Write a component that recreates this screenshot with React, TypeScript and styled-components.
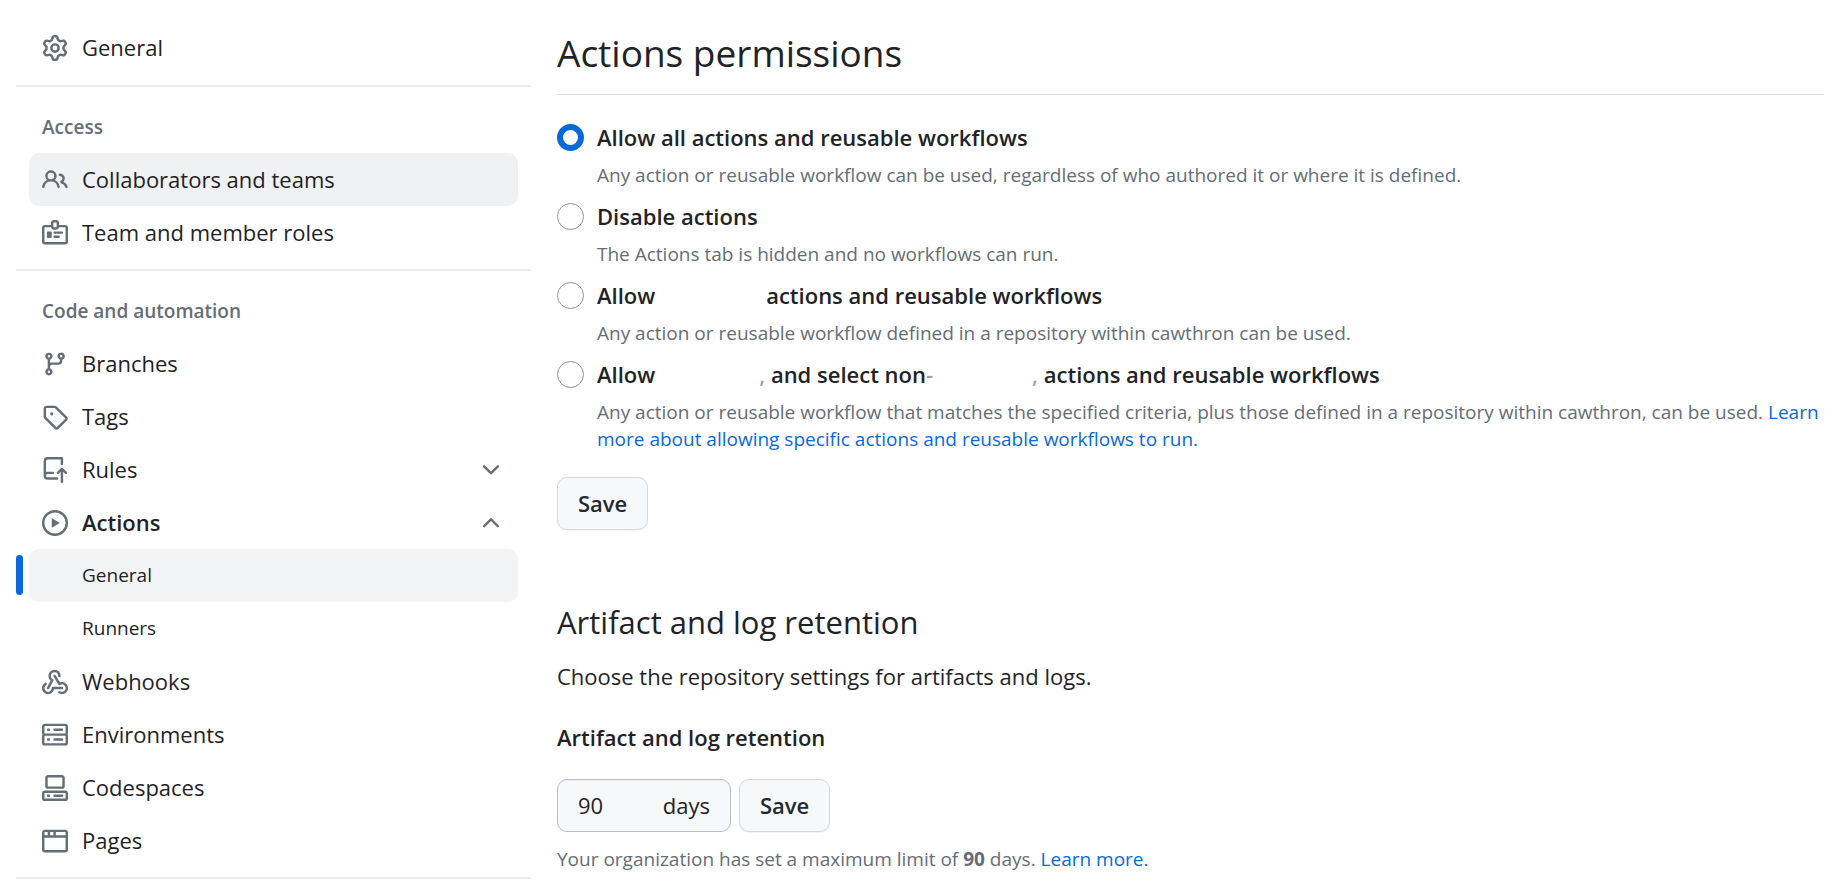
import React, { useState } from 'react';
import styled, { createGlobalStyle } from 'styled-components';

const color = {
  text: '#1f2328',
  muted: '#656d76',
  link: '#0969da',
  border: '#d8dee4',
  divider: '#e8ebef',
  hover: '#f0f1f3',
  selected: '#f3f4f6',
  control: '#f6f8fa',
};

const GlobalStyle = createGlobalStyle`
  *, *::before, *::after { box-sizing: border-box; }
  body {
    margin: 0;
    background: #ffffff;
    color: ${color.text};
    font-family: "Open Sans", "Noto Sans", sans-serif;
    font-size: 22px;
    line-height: 33px;
  }
`;

const Page = styled.div`
  display: grid;
  grid-template-columns: 515px minmax(0, 1fr);
  column-gap: 26px;
  padding: 0 18px 0 16px;

  @media (max-width: 1100px) {
    grid-template-columns: minmax(0, 1fr);
  }
`;

const Sidebar = styled.nav`
  padding-top: 21px;
`;

const NavGroup = styled.section`
  padding-bottom: 10px;
  border-bottom: 2px solid ${color.divider};

  &:first-child {
    padding-bottom: 11px;
  }
`;

const GroupTitle = styled.h3`
  margin: 0;
  padding: 28px 26px 14px;
  font-size: 19px;
  font-weight: 600;
  line-height: 24px;
  color: ${color.muted};
`;

const NavList = styled.ul`
  list-style: none;
  margin: 0;
  padding: 0;
`;

const NavItem = styled.li`
  margin: 0 13px;
`;

const SubItem = styled.li``;

const NavLink = styled.a<{ $highlight?: boolean }>`
  display: flex;
  align-items: center;
  gap: 14px;
  height: 53px;
  padding: 0 13px;
  border-radius: 10px;
  color: ${color.text};
  text-decoration: none;
  background: ${(p) => (p.$highlight ? color.hover : 'transparent')};
`;

const NavToggle = styled.button<{ $current?: boolean }>`
  display: flex;
  align-items: center;
  gap: 14px;
  width: 100%;
  height: 53px;
  padding: 0 14px 0 13px;
  border: 0;
  border-radius: 10px;
  background: transparent;
  color: ${color.text};
  font: inherit;
  font-weight: ${(p) => (p.$current ? 600 : 400)};
  text-align: left;
  cursor: pointer;
`;

const ToggleLabel = styled.span`
  flex: 1;
`;

const SubLink = styled.a<{ $current?: boolean }>`
  position: relative;
  display: flex;
  align-items: center;
  height: 53px;
  padding-left: 53px;
  border-radius: 10px;
  font-size: 19px;
  color: ${color.text};
  text-decoration: none;
  background: ${(p) => (p.$current ? color.selected : 'transparent')};

  &::before {
    content: '';
    display: ${(p) => (p.$current ? 'block' : 'none')};
    position: absolute;
    top: 6px;
    bottom: 7px;
    left: -13px;
    width: 7px;
    border-radius: 4px;
    background: ${color.link};
  }
`;

const IconSvg = styled.svg`
  flex: none;
  width: 26px;
  height: 26px;
  fill: ${color.muted};
`;

const Main = styled.main`
  padding: 29px 0 12px;
`;

const Title = styled.h2`
  margin: 0 0 26px;
  padding-bottom: 17px;
  border-bottom: 1px solid ${color.border};
  font-size: 37px;
  font-weight: 400;
  line-height: 48px;
`;

const Options = styled.fieldset`
  display: flex;
  flex-direction: column;
  gap: 11px;
  min-width: 0;
  margin: 0 0 24px;
  padding: 0;
  border: 0;
`;

const Option = styled.div`
  display: grid;
  grid-template-columns: 27px minmax(0, 1fr);
  column-gap: 13px;
  row-gap: 9px;
  align-items: center;
`;

const Radio = styled.input`
  appearance: none;
  width: 27px;
  height: 27px;
  margin: 0;
  border: 1px solid #8c959f;
  border-radius: 50%;
  background: #ffffff;

  &:checked {
    border: 6px solid ${color.link};
  }
`;

const OptionLabel = styled.label`
  font-weight: 600;
  line-height: 32px;
`;

const OptionNote = styled.p`
  grid-column: 2;
  margin: 0;
  font-size: 19px;
  line-height: 27px;
  color: ${color.muted};
`;

const Blank = styled.span<{ $width: number }>`
  display: inline-block;
  width: ${(p) => p.$width}px;
`;

const Faded = styled.span`
  color: #a0a3a8;
`;

const TextLink = styled.a`
  color: ${color.link};
  text-decoration: none;
`;

const Button = styled.button`
  height: 53px;
  padding: 0 20px;
  border: 1px solid #d5d8db;
  border-radius: 10px;
  background: ${color.control};
  box-shadow: 0 1px 1px rgba(31, 35, 40, 0.05);
  color: #24292f;
  font: inherit;
  font-weight: 600;
  cursor: pointer;
`;

const SectionTitle = styled.h3`
  margin: 71px 0 17px;
  font-size: 31px;
  font-weight: 400;
  line-height: 42px;
`;

const Paragraph = styled.p`
  margin: 0 0 28px;
`;

const FieldLabel = styled.label`
  display: block;
  margin-bottom: 25px;
  font-weight: 600;
`;

const FieldRow = styled.div`
  display: flex;
  gap: 8px;
`;

const DaysField = styled.div`
  display: flex;
  align-items: center;
  justify-content: space-between;
  width: 174px;
  height: 53px;
  padding: 0 20px;
  border: 1px solid #b6bec8;
  border-radius: 10px;
  background: ${color.control};
  box-shadow: inset 0 1px 0 rgba(208, 215, 222, 0.3);
`;

const DaysInput = styled.input`
  width: 64px;
  padding: 0;
  border: 0;
  outline: 0;
  background: transparent;
  color: inherit;
  font: inherit;
`;

const Hint = styled.p`
  margin: 14px 0 0;
  font-size: 19px;
  line-height: 27px;
  color: ${color.muted};
`;

const paths = {
  gear: 'M8 0a8.2 8.2 0 0 1 .701.031C9.444.095 9.99.645 10.16 1.29l.288 1.107c.018.066.079.158.212.224.231.114.454.243.668.386.123.082.233.09.299.071l1.103-.303c.644-.176 1.392.021 1.82.63.27.385.506.792.704 1.218.315.675.111 1.422-.364 1.891l-.814.806c-.049.048-.098.147-.088.294.016.257.016.515 0 .772-.01.147.038.246.088.294l.814.806c.475.469.679 1.216.364 1.891a7.977 7.977 0 0 1-.704 1.217c-.428.61-1.176.807-1.82.63l-1.102-.302c-.067-.019-.177-.011-.3.071a5.909 5.909 0 0 1-.668.386c-.133.066-.194.158-.211.224l-.29 1.106c-.168.646-.715 1.196-1.458 1.26a8.006 8.006 0 0 1-1.402 0c-.743-.064-1.289-.614-1.458-1.26l-.289-1.106c-.018-.066-.079-.158-.212-.224a5.738 5.738 0 0 1-.668-.386c-.123-.082-.233-.09-.299-.071l-1.103.303c-.644.176-1.392-.021-1.82-.63a8.12 8.12 0 0 1-.704-1.218c-.315-.675-.111-1.422.363-1.891l.815-.806c.05-.048.098-.147.088-.294a6.214 6.214 0 0 1 0-.772c.01-.147-.038-.246-.088-.294l-.815-.806C.635 6.045.431 5.298.746 4.623a7.92 7.92 0 0 1 .704-1.217c.428-.61 1.176-.807 1.82-.63l1.102.302c.067.019.177.011.3-.071.214-.143.437-.272.668-.386.133-.066.194-.158.211-.224l.29-1.106C6.009.645 6.556.095 7.299.03 7.53.01 7.764 0 8 0Zm-.571 1.525c-.036.003-.108.036-.137.146l-.289 1.105c-.147.561-.549.967-.998 1.189-.173.086-.34.183-.5.29-.417.278-.97.423-1.529.27l-1.103-.303c-.109-.03-.175.016-.195.045-.22.312-.412.644-.573.99-.014.031-.021.11.059.19l.815.806c.411.406.562.957.53 1.456a4.709 4.709 0 0 0 0 .582c.032.499-.119 1.05-.53 1.456l-.815.806c-.081.08-.073.159-.059.19.162.346.353.677.573.989.02.03.085.076.195.046l1.102-.303c.56-.153 1.113-.008 1.53.27.161.107.328.204.501.29.447.222.85.629.997 1.189l.289 1.105c.029.109.101.143.137.146a6.6 6.6 0 0 0 1.142 0c.036-.003.108-.036.137-.146l.289-1.105c.147-.561.549-.967.998-1.189.173-.086.34-.183.5-.29.417-.278.97-.423 1.529-.27l1.103.303c.109.029.175-.016.195-.045.22-.313.411-.644.573-.99.014-.031.021-.11-.059-.19l-.815-.806c-.411-.406-.562-.957-.53-1.456a4.709 4.709 0 0 0 0-.582c-.032-.499.119-1.05.53-1.456l.815-.806c.081-.08.073-.159.059-.19a6.464 6.464 0 0 0-.573-.989c-.02-.03-.085-.076-.195-.046l-1.102.303c-.56.153-1.113.008-1.53-.27a4.44 4.44 0 0 0-.501-.29c-.447-.222-.85-.629-.997-1.189l-.289-1.105c-.029-.11-.101-.143-.137-.146a6.6 6.6 0 0 0-1.142 0ZM11 8a3 3 0 1 1-6 0 3 3 0 0 1 6 0ZM9.5 8a1.5 1.5 0 1 0-3.001.001A1.5 1.5 0 0 0 9.5 8Z',
  people:
    'M2 5.5a3.5 3.5 0 1 1 5.898 2.549 5.508 5.508 0 0 1 3.034 4.084.75.75 0 1 1-1.482.235 4 4 0 0 0-7.9 0 .75.75 0 0 1-1.482-.236A5.507 5.507 0 0 1 3.102 8.05 3.493 3.493 0 0 1 2 5.5ZM11 4a3.001 3.001 0 0 1 2.22 5.018 5.01 5.01 0 0 1 2.56 3.012.749.749 0 0 1-.885.954.752.752 0 0 1-.549-.514 3.507 3.507 0 0 0-2.522-2.372.75.75 0 0 1-.574-.73v-.352a.75.75 0 0 1 .416-.672A1.5 1.5 0 0 0 11 5.5.75.75 0 0 1 11 4Zm-5.5-.5a2 2 0 1 0-.001 3.999A2 2 0 0 0 5.5 3.5Z',
  badge:
    'M3 7.5a.5.5 0 0 1 .5-.5h2a.5.5 0 0 1 .5.5v3a.5.5 0 0 1-.5.5h-2a.5.5 0 0 1-.5-.5v-3Zm10 .25a.75.75 0 0 1-.75.75h-4.5a.75.75 0 0 1 0-1.5h4.5a.75.75 0 0 1 .75.75ZM10.25 11h-2.5a.75.75 0 0 1 0-1.5h2.5a.75.75 0 0 1 0 1.5Z M7.25 0h1.5c.966 0 1.75.784 1.75 1.75V3h3.75c.966 0 1.75.784 1.75 1.75v8.5A1.75 1.75 0 0 1 14.25 15H1.75A1.75 1.75 0 0 1 0 13.25v-8.5C0 3.784.784 3 1.75 3H5.5V1.75C5.5.784 6.284 0 7.25 0Zm3.232 4.5A1.75 1.75 0 0 1 8.75 6h-1.5a1.75 1.75 0 0 1-1.732-1.5H1.75a.25.25 0 0 0-.25.25v8.5c0 .138.112.25.25.25h12.5a.25.25 0 0 0 .25-.25v-8.5a.25.25 0 0 0-.25-.25ZM7 1.75v2.5c0 .138.112.25.25.25h1.5A.25.25 0 0 0 9 4.25v-2.5a.25.25 0 0 0-.25-.25h-1.5a.25.25 0 0 0-.25.25Z',
  branch:
    'M9.5 3.25a2.25 2.25 0 1 1 3 2.122V6A2.5 2.5 0 0 1 10 8.5H6a1 1 0 0 0-1 1v1.128a2.251 2.251 0 1 1-1.5 0V5.372a2.25 2.25 0 1 1 1.5 0v1.836A2.493 2.493 0 0 1 6 7h4a1 1 0 0 0 1-1v-.628A2.25 2.25 0 0 1 9.5 3.25Zm-6 0a.75.75 0 1 0 1.5 0 .75.75 0 0 0-1.5 0Zm8.25-.75a.75.75 0 1 0 0 1.5.75.75 0 0 0 0-1.5ZM4.25 12a.75.75 0 1 0 0 1.5.75.75 0 0 0 0-1.5Z',
  tag: 'M1 7.775V2.75C1 1.784 1.784 1 2.75 1h5.025c.464 0 .91.184 1.238.513l6.25 6.25a1.75 1.75 0 0 1 0 2.474l-5.026 5.026a1.75 1.75 0 0 1-2.474 0l-6.25-6.25A1.752 1.752 0 0 1 1 7.775Zm1.5 0c0 .066.026.13.073.177l6.25 6.25a.25.25 0 0 0 .354 0l5.025-5.025a.25.25 0 0 0 0-.354l-6.25-6.25a.25.25 0 0 0-.177-.073H2.75a.25.25 0 0 0-.25.25ZM6 5a1 1 0 1 1 0 2 1 1 0 0 1 0-2Z',
  rules:
    'M1 2.5A2.5 2.5 0 0 1 3.5 0h8.75a.75.75 0 0 1 .75.75v3.5a.75.75 0 0 1-1.5 0V1.5h-8a1 1 0 0 0-1 1v6.708A2.493 2.493 0 0 1 3.5 9h3.25a.75.75 0 0 1 0 1.5H3.5a1 1 0 0 0 0 2h5.75a.75.75 0 0 1 0 1.5H3.5A2.5 2.5 0 0 1 1 11.5Zm13.23 7.79h-.001l-1.224-1.224v6.184a.75.75 0 0 1-1.5 0V9.066L10.28 10.29a.75.75 0 0 1-1.06-1.061l2.505-2.504a.75.75 0 0 1 1.06 0L15.29 9.23a.751.751 0 0 1-.018 1.042.751.751 0 0 1-1.042.018Z',
  play: 'M8 0a8 8 0 1 1 0 16A8 8 0 0 1 8 0ZM1.5 8a6.5 6.5 0 1 0 13 0 6.5 6.5 0 0 0-13 0Zm4.879-2.773 4.264 2.559a.25.25 0 0 1 0 .428l-4.264 2.559A.25.25 0 0 1 6 10.559V5.442a.25.25 0 0 1 .379-.215Z',
  webhook:
    'M5.5 4.25a2.25 2.25 0 0 1 4.5 0 .75.75 0 0 0 1.5 0 3.75 3.75 0 1 0-6.14 2.889l-2.272 4.258a.75.75 0 0 0 1.324.706L7 7.25a.75.75 0 0 0-.309-1.015A2.25 2.25 0 0 1 5.5 4.25Z M7.364 3.607a.75.75 0 0 1 1.03.257l2.608 4.349a3.75 3.75 0 1 1-.628 6.785.75.75 0 0 1 .752-1.299 2.25 2.25 0 1 0-.033-3.88.75.75 0 0 1-1.03-.256L7.107 4.636a.75.75 0 0 1 .257-1.03Z M2.9 8.776A.75.75 0 0 1 2.625 9.8 2.25 2.25 0 1 0 6 11.75a.75.75 0 0 1 .75-.751h5.5a.75.75 0 0 1 0 1.5H7.425a3.751 3.751 0 1 1-5.55-3.998.75.75 0 0 1 1.024.274Z',
  server:
    'M1.75 1h12.5c.966 0 1.75.784 1.75 1.75v4c0 .372-.116.717-.314 1 .198.283.314.628.314 1v4a1.75 1.75 0 0 1-1.75 1.75H1.75A1.75 1.75 0 0 1 0 12.75v-4c0-.358.109-.707.314-1a1.739 1.739 0 0 1-.314-1v-4C0 1.784.784 1 1.75 1ZM1.5 2.75v4c0 .138.112.25.25.25h12.5a.25.25 0 0 0 .25-.25v-4a.25.25 0 0 0-.25-.25H1.75a.25.25 0 0 0-.25.25Zm.25 5.75a.25.25 0 0 0-.25.25v4c0 .138.112.25.25.25h12.5a.25.25 0 0 0 .25-.25v-4a.25.25 0 0 0-.25-.25ZM7 4.75A.75.75 0 0 1 7.75 4h4.5a.75.75 0 0 1 0 1.5h-4.5A.75.75 0 0 1 7 4.75ZM7.75 10h4.5a.75.75 0 0 1 0 1.5h-4.5a.75.75 0 0 1 0-1.5ZM3 4.75A.75.75 0 0 1 3.75 4h.5a.75.75 0 0 1 0 1.5h-.5A.75.75 0 0 1 3 4.75ZM3.75 10h.5a.75.75 0 0 1 0 1.5h-.5a.75.75 0 0 1 0-1.5Z',
  codespaces:
    'M0 11.25c0-.966.784-1.75 1.75-1.75h12.5c.966 0 1.75.784 1.75 1.75v3A1.75 1.75 0 0 1 14.25 16H1.75A1.75 1.75 0 0 1 0 14.25Zm2-9.5C2 .784 2.784 0 3.75 0h8.5C13.216 0 14 .784 14 1.75v5a1.75 1.75 0 0 1-1.75 1.75h-8.5A1.75 1.75 0 0 1 2 6.75Zm1.75-.25a.25.25 0 0 0-.25.25v5c0 .138.112.25.25.25h8.5a.25.25 0 0 0 .25-.25v-5a.25.25 0 0 0-.25-.25Zm-2 9.5a.25.25 0 0 0-.25.25v3c0 .138.112.25.25.25h12.5a.25.25 0 0 0 .25-.25v-3a.25.25 0 0 0-.25-.25Z M7 12.75a.75.75 0 0 1 .75-.75h4.5a.75.75 0 0 1 0 1.5h-4.5a.75.75 0 0 1-.75-.75Zm-4 0a.75.75 0 0 1 .75-.75h.5a.75.75 0 0 1 0 1.5h-.5a.75.75 0 0 1-.75-.75Z',
  browser:
    'M0 2.75C0 1.784.784 1 1.75 1h12.5c.966 0 1.75.784 1.75 1.75v10.5A1.75 1.75 0 0 1 14.25 15H1.75A1.75 1.75 0 0 1 0 13.25ZM14.5 6h-13v7.25c0 .138.112.25.25.25h12.5a.25.25 0 0 0 .25-.25Zm-6-3.5v2h6V2.75a.25.25 0 0 0-.25-.25ZM5 2.5v2h2v-2Zm-3.25 0a.25.25 0 0 0-.25.25V4.5h2v-2Z',
  chevronDown:
    'M12.78 5.22a.749.749 0 0 1 0 1.06l-4.25 4.25a.749.749 0 0 1-1.06 0L3.22 6.28a.749.749 0 1 1 1.06-1.06L8 8.939l3.72-3.719a.749.749 0 0 1 1.06 0Z',
  chevronUp:
    'M3.22 10.53a.749.749 0 0 1 0-1.06l4.25-4.25a.749.749 0 0 1 1.06 0l4.25 4.25a.749.749 0 1 1-1.06 1.06L8 6.811 4.28 10.53a.749.749 0 0 1-1.06 0Z',
};

type IconName = keyof typeof paths;

function Icon({ name }: { name: IconName }) {
  return (
    <IconSvg viewBox="0 0 16 16" aria-hidden="true">
      <path d={paths[name]} />
    </IconSvg>
  );
}

function NavEntry({ icon, label, highlight }: { icon: IconName; label: string; highlight?: boolean }) {
  return (
    <NavItem>
      <NavLink href="#" $highlight={highlight}>
        <Icon name={icon} />
        {label}
      </NavLink>
    </NavItem>
  );
}

export default function App() {
  const [policy, setPolicy] = useState('all');
  const [days, setDays] = useState('90');

  const radio = (value: string) => (
    <Radio
      type="radio"
      name="policy"
      id={`policy-${value}`}
      checked={policy === value}
      onChange={() => setPolicy(value)}
    />
  );

  return (
    <>
      <GlobalStyle />
      <Page>
        <Sidebar>
          <NavGroup>
            <NavList>
              <NavEntry icon="gear" label="General" />
            </NavList>
          </NavGroup>
          <NavGroup>
            <GroupTitle>Access</GroupTitle>
            <NavList>
              <NavEntry icon="people" label="Collaborators and teams" highlight />
              <NavEntry icon="badge" label="Team and member roles" />
            </NavList>
          </NavGroup>
          <NavGroup>
            <GroupTitle>Code and automation</GroupTitle>
            <NavList>
              <NavEntry icon="branch" label="Branches" />
              <NavEntry icon="tag" label="Tags" />
              <NavItem>
                <NavToggle type="button" aria-expanded={false}>
                  <Icon name="rules" />
                  <ToggleLabel>Rules</ToggleLabel>
                  <Icon name="chevronDown" />
                </NavToggle>
              </NavItem>
              <NavItem>
                <NavToggle type="button" aria-expanded={true} $current>
                  <Icon name="play" />
                  <ToggleLabel>Actions</ToggleLabel>
                  <Icon name="chevronUp" />
                </NavToggle>
                <NavList>
                  <SubItem>
                    <SubLink href="#" aria-current="page" $current>
                      General
                    </SubLink>
                  </SubItem>
                  <SubItem>
                    <SubLink href="#">Runners</SubLink>
                  </SubItem>
                </NavList>
              </NavItem>
              <NavEntry icon="webhook" label="Webhooks" />
              <NavEntry icon="server" label="Environments" />
              <NavEntry icon="codespaces" label="Codespaces" />
              <NavEntry icon="browser" label="Pages" />
            </NavList>
          </NavGroup>
        </Sidebar>

        <Main>
          <Title>Actions permissions</Title>
          <Options aria-label="Actions permissions">
            <Option>
              {radio('all')}
              <OptionLabel htmlFor="policy-all">Allow all actions and reusable workflows</OptionLabel>
              <OptionNote>
                Any action or reusable workflow can be used, regardless of who authored it or where it is defined.
              </OptionNote>
            </Option>
            <Option>
              {radio('none')}
              <OptionLabel htmlFor="policy-none">Disable actions</OptionLabel>
              <OptionNote>The Actions tab is hidden and no workflows can run.</OptionNote>
            </Option>
            <Option>
              {radio('local')}
              <OptionLabel htmlFor="policy-local">
                Allow
                <Blank $width={111} />
                actions and reusable workflows
              </OptionLabel>
              <OptionNote>
                Any action or reusable workflow defined in a repository within cawthron can be used.
              </OptionNote>
            </Option>
            <Option>
              {radio('selected')}
              <OptionLabel htmlFor="policy-selected">
                Allow
                <Blank $width={104} />
                <Faded>,</Faded> and select non<Faded>-</Faded>
                <Blank $width={99} />
                <Faded>,</Faded> actions and reusable workflows
              </OptionLabel>
              <OptionNote>
                Any action or reusable workflow that matches the specified criteria, plus those defined in a
                repository within cawthron, can be used.{' '}
                <TextLink href="#">
                  Learn more about allowing specific actions and reusable workflows to run.
                </TextLink>
              </OptionNote>
            </Option>
          </Options>
          <Button type="button">Save</Button>

          <SectionTitle>Artifact and log retention</SectionTitle>
          <Paragraph>Choose the repository settings for artifacts and logs.</Paragraph>
          <FieldLabel htmlFor="retention-days">Artifact and log retention</FieldLabel>
          <FieldRow>
            <DaysField>
              <DaysInput
                id="retention-days"
                type="text"
                inputMode="numeric"
                value={days}
                onChange={(e) => setDays(e.target.value)}
              />
              <span>days</span>
            </DaysField>
            <Button type="button">Save</Button>
          </FieldRow>
          <Hint>
            Your organization has set a maximum limit of <strong>90</strong> days.{' '}
            <TextLink href="#">Learn more.</TextLink>
          </Hint>
        </Main>
      </Page>
    </>
  );
}
